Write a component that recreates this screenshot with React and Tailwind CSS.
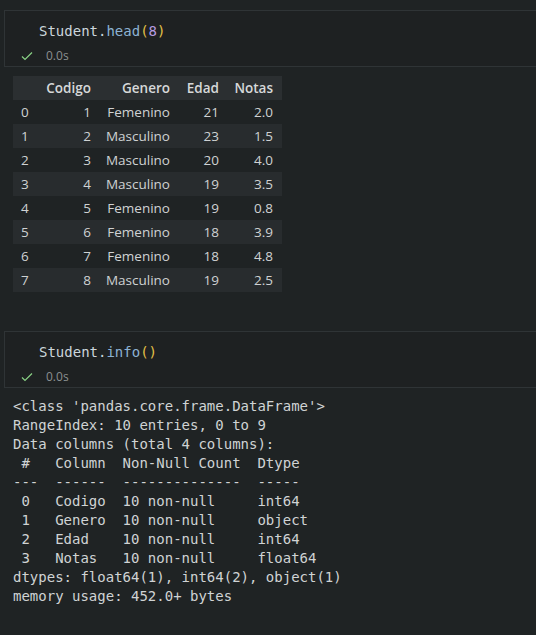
import React from 'react';

const rows = [
  [0, 1, 'Femenino', 21, '2.0'],
  [1, 2, 'Masculino', 23, '1.5'],
  [2, 3, 'Masculino', 20, '4.0'],
  [3, 4, 'Masculino', 19, '3.5'],
  [4, 5, 'Femenino', 19, '0.8'],
  [5, 6, 'Femenino', 18, '3.9'],
  [6, 7, 'Femenino', 18, '4.8'],
  [7, 8, 'Masculino', 19, '2.5'],
];

const infoText = `<class 'pandas.core.frame.DataFrame'>
RangeIndex: 10 entries, 0 to 9
Data columns (total 4 columns):
 #   Column  Non-Null Count  Dtype  
---  ------  --------------  -----  
 0   Codigo  10 non-null     int64  
 1   Genero  10 non-null     object 
 2   Edad    10 non-null     int64  
 3   Notas   10 non-null     float64
dtypes: float64(1), int64(2), object(1)
memory usage: 452.0+ bytes`;

const mono = { fontFamily: '"DejaVu Sans Mono", monospace' };

const Check = () => (
  <svg width="12" height="10" viewBox="0 0 12 10" fill="none">
    <path d="M1 5.5 L4 8.5 L11 1.5" stroke="#89d185" strokeWidth="1.2" />
  </svg>
);

const Cell = ({ method, arg }) => (
  <div className="ml-[4px] h-[57px] border border-r-0 border-[#2f3436] bg-[#1e2122]">
    <div className="pl-[34px] pt-[10px] h-[30px] text-[14px] leading-[20px] text-[#ccd6dc]" style={mono}>
      Student.<span className="text-[#8cb2d3]">{method}</span>
      <span className="text-[#e2c047]">(</span>
      {arg && <span className="text-[#b69ce0]">{arg}</span>}
      <span className="text-[#e2c047]">)</span>
    </div>
    <div className="flex items-center h-[16px] mt-[7px] pl-[16px] gap-[13px]">
      <Check />
      <span className="text-[12px] text-[#8b9091]" style={{ fontFamily: '"Open Sans", sans-serif' }}>0.0s</span>
    </div>
  </div>
);

export default function App() {
  return (
    <div className="w-[536px] h-[635px] overflow-hidden bg-[#1f2324] pt-[10px]">
      <Cell method="head" arg="8" />

      <table
        className="ml-[13px] mt-[9px] border-collapse text-[13.5px] text-[#cfd2d3]"
        style={{ fontFamily: '"Open Sans", sans-serif' }}
      >
        <thead>
          <tr className="h-[24px] bg-[#2b2f31] text-[#d6d8d9]">
            <th className="w-[27px]"></th>
            <th className="w-[59px] text-right pr-[8px] font-semibold">Codigo</th>
            <th className="w-[79px] text-right pr-[8px] font-semibold">Genero</th>
            <th className="w-[49px] text-right pr-[8px] font-semibold">Edad</th>
            <th className="w-[55px] text-right pr-[9px] font-semibold">Notas</th>
          </tr>
        </thead>
        <tbody>
          {rows.map((r, i) => (
            <tr key={i} className={`h-[24px] ${i % 2 ? 'bg-[#282c2e]' : ''}`}>
              <td className="pl-[8px] text-left">{r[0]}</td>
              <td className="text-right pr-[8px]">{r[1]}</td>
              <td className="text-right pr-[8px]">{r[2]}</td>
              <td className="text-right pr-[8px]">{r[3]}</td>
              <td className="text-right pr-[9px]">{r[4]}</td>
            </tr>
          ))}
        </tbody>
      </table>

      <div className="mt-[39px]">
        <Cell method="info" />
      </div>

      <pre className="ml-[13px] mt-[9px] text-[14px] leading-[19px] text-[#d0d3d4]" style={mono}>
        {infoText}
      </pre>
    </div>
  );
}
